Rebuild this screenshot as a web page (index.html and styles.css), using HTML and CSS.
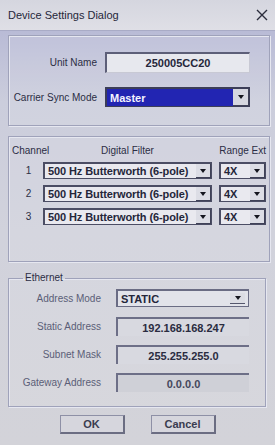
FILE: index.html
```html
<!DOCTYPE html>
<html>
  <head>
    <meta charset="UTF-8" />
    <title>Device Settings Dialog</title>
    <link rel="stylesheet" href="styles.css">
  </head>
  <body>
    <div class="window">
      <div class="titlebar">
        <span class="title">Device Settings Dialog</span>
        <svg class="close" width="12" height="12" viewBox="0 0 12 12">
          <path d="M1 1 L11 11 M11 1 L1 11" stroke="#2b2d3c" stroke-width="1.4" fill="none" />
        </svg>
      </div>

      <div class="client">
        <div class="group unit-group">
          <span class="label">Unit Name</span>
          <div class="field field-unit">250005CC20</div>
          <span class="label">Carrier Sync Mode</span>
          <div class="combo combo-blue">
            <span class="combo-text">Master</span>
            <span class="drop"><i class="arrow"></i></span>
          </div>
        </div>

        <div class="group channel-group">
          <span class="hdr hdr-channel">Channel</span>
          <span class="hdr hdr-filter">Digital Filter</span>
          <span class="hdr hdr-range">Range Ext</span>

          <span class="num">1</span>
          <div class="combo combo-filter"><span class="combo-text">500 Hz Butterworth (6-pole)</span><span class="drop"><i class="arrow"></i></span></div>
          <div class="combo combo-range"><span class="combo-text">4X</span><span class="drop"><i class="arrow"></i></span></div>

          <span class="num">2</span>
          <div class="combo combo-filter"><span class="combo-text">500 Hz Butterworth (6-pole)</span><span class="drop"><i class="arrow"></i></span></div>
          <div class="combo combo-range"><span class="combo-text">4X</span><span class="drop"><i class="arrow"></i></span></div>

          <span class="num">3</span>
          <div class="combo combo-filter"><span class="combo-text">500 Hz Butterworth (6-pole)</span><span class="drop"><i class="arrow"></i></span></div>
          <div class="combo combo-range"><span class="combo-text">4X</span><span class="drop"><i class="arrow"></i></span></div>
        </div>

        <fieldset class="group eth-group">
          <legend>Ethernet</legend>
          <div class="eth-grid">
            <span class="eth-label">Address Mode</span>
            <div class="combo combo-mode"><span class="combo-text">STATIC</span><span class="drop"><i class="arrow"></i></span></div>
            <span class="eth-label">Static Address</span>
            <div class="eth-field">192.168.168.247</div>
            <span class="eth-label">Subnet Mask</span>
            <div class="eth-field">255.255.255.0</div>
            <span class="eth-label">Gateway Address</span>
            <div class="eth-field eth-disabled">0.0.0.0</div>
          </div>
        </fieldset>

        <div class="buttons">
          <button class="btn">OK</button>
          <button class="btn">Cancel</button>
        </div>
      </div>
    </div>
  </body>
</html>
```

FILE: styles.css
```css
* {
  box-sizing: border-box;
}

body {
  margin: 0;
  width: 275px;
  height: 445px;
  overflow: hidden;
  font-family: "Liberation Sans", Arial, sans-serif;
  color: #2a2c42;
  background: #d0d1dc;
}

.window {
  width: 275px;
  height: 445px;
  display: flex;
  flex-direction: column;
}

/* title bar */
.titlebar {
  height: 31px;
  flex-shrink: 0;
  display: flex;
  align-items: center;
  justify-content: space-between;
  padding: 0 7px 0 8px;
  background: linear-gradient(#d5d6df, #dfdfe6);
  border-bottom: 1px solid #a9abc6;
  font-size: 11px;
  color: #25273a;
}

.close {
  display: block;
}

/* client area */
.client {
  flex: 1;
  padding: 4px 5px 0 8px;
  background: linear-gradient(#b9bbd6, #cbcddc 70px, #d1d2dc 200px, #d3d3d9);
}

.group {
  border: 1px solid #9fa2ba;
  box-shadow: inset 1px 1px 0 #e6e7f0, 1px 1px 0 #e6e7f0;
  background: rgba(255, 255, 255, 0.1);
}

.label {
  font-size: 10px;
  text-align: right;
  white-space: nowrap;
  color: #2b2d44;
}

.unit-group {
  display: grid;
  grid-template-columns: 86px 145px;
  grid-template-rows: 21px 20px;
  column-gap: 8px;
  row-gap: 14px;
  align-items: center;
  padding: 16px 0 18px 2px;
}

.field {
  height: 21px;
  display: flex;
  align-items: center;
  justify-content: center;
  font-size: 11px;
  font-weight: bold;
  background: #e7e8ee;
  border-top: 2px solid #5d5f78;
  border-left: 2px solid #5d5f78;
  border-right: 1px solid #c8c9d4;
  border-bottom: 1px solid #c8c9d4;
  color: #24263a;
}

/* combo boxes */
.combo {
  display: flex;
  align-items: stretch;
  background: #e9e9ef;
  border: 1px solid #4b4d64;
  border-top-width: 2px;
  border-left-width: 2px;
}

.combo-text {
  flex: 1;
  display: flex;
  align-items: center;
  padding-left: 3px;
  font-size: 11px;
  font-weight: bold;
  white-space: nowrap;
  overflow: hidden;
  color: #24263a;
}

.drop {
  width: 15px;
  display: flex;
  align-items: center;
  justify-content: center;
  background: #dcdde5;
  border-right: 1px solid #3f4157;
  border-bottom: 1px solid #3f4157;
}

.arrow {
  width: 0;
  height: 0;
  border-left: 3px solid transparent;
  border-right: 3px solid transparent;
  border-top: 4px solid #15161f;
}

.combo-blue {
  height: 20px;
  border-color: #3c3e58;
}

.combo-blue .combo-text {
  background: #2225b2;
  color: #f4f4ff;
}

.combo-blue .drop {
  width: 16px;
  background: #d6d7e0;
}

/* channel table */
.channel-group {
  margin-top: 10px;
  display: grid;
  grid-template-columns: 31px 169px 54px;
  grid-template-rows: 11px 17px 17px 17px;
  row-gap: 6px;
  align-items: center;
  padding: 8px 3px 36px 3px;
}

.hdr {
  font-size: 10px;
  line-height: 11px;
  white-space: nowrap;
  color: #2b2d44;
}

.hdr-filter {
  text-align: center;
}

.hdr-range {
  text-align: right;
}

.num {
  font-size: 10px;
  text-align: center;
  padding-left: 2px;
  color: #2b2d44;
}

.combo-filter,
.combo-range {
  height: 17px;
}

.combo-filter .combo-text {
  letter-spacing: -0.1px;
}

.combo-range {
  width: 47px;
  justify-self: end;
}

/* ethernet */
.eth-group {
  margin: 9px 4px 0 0;
  padding: 4px 0 14px 8px;
  min-width: 0;
}

.eth-group legend {
  font-size: 10px;
  line-height: 14px;
  padding: 0 2px;
  margin-left: 6px;
  color: #2b2d44;
}

.eth-grid {
  display: grid;
  grid-template-columns: 84px 133px;
  grid-auto-rows: 19px;
  column-gap: 15px;
  row-gap: 9px;
  align-items: center;
}

.eth-label {
  font-size: 10px;
  text-align: right;
  white-space: nowrap;
  color: #5b5e77;
}

.combo-mode {
  height: 18px;
  align-self: start;
  background: #e2e3ea;
  border-color: #6a6c84;
}

.combo-mode .drop {
  background: #dcdde4;
  border: none;
  margin: 2px 3px 2px 0;
  border-bottom: 1px solid #55576d;
}

.eth-field {
  height: 19px;
  display: flex;
  align-items: center;
  justify-content: center;
  font-size: 11px;
  font-weight: bold;
  color: #2a2c40;
  background: #d8d9e0;
  border-top: 2px solid #6d6f87;
  border-left: 2px solid #6d6f87;
}

.eth-disabled {
  background: #cfd0d7;
  color: #45475c;
}

/* buttons */
.buttons {
  display: flex;
  justify-content: center;
  gap: 26px;
  margin-top: 8px;
  padding-right: 3px;
}

.btn {
  width: 65px;
  height: 19px;
  padding: 0;
  font-family: "Liberation Sans", Arial, sans-serif;
  font-size: 11px;
  font-weight: bold;
  color: #3a3c50;
  background: #d6d6dd;
  border: 1px solid #8e90a6;
  border-right: 2px solid #6b6d82;
  border-bottom: 2px solid #6b6d82;
}
```
